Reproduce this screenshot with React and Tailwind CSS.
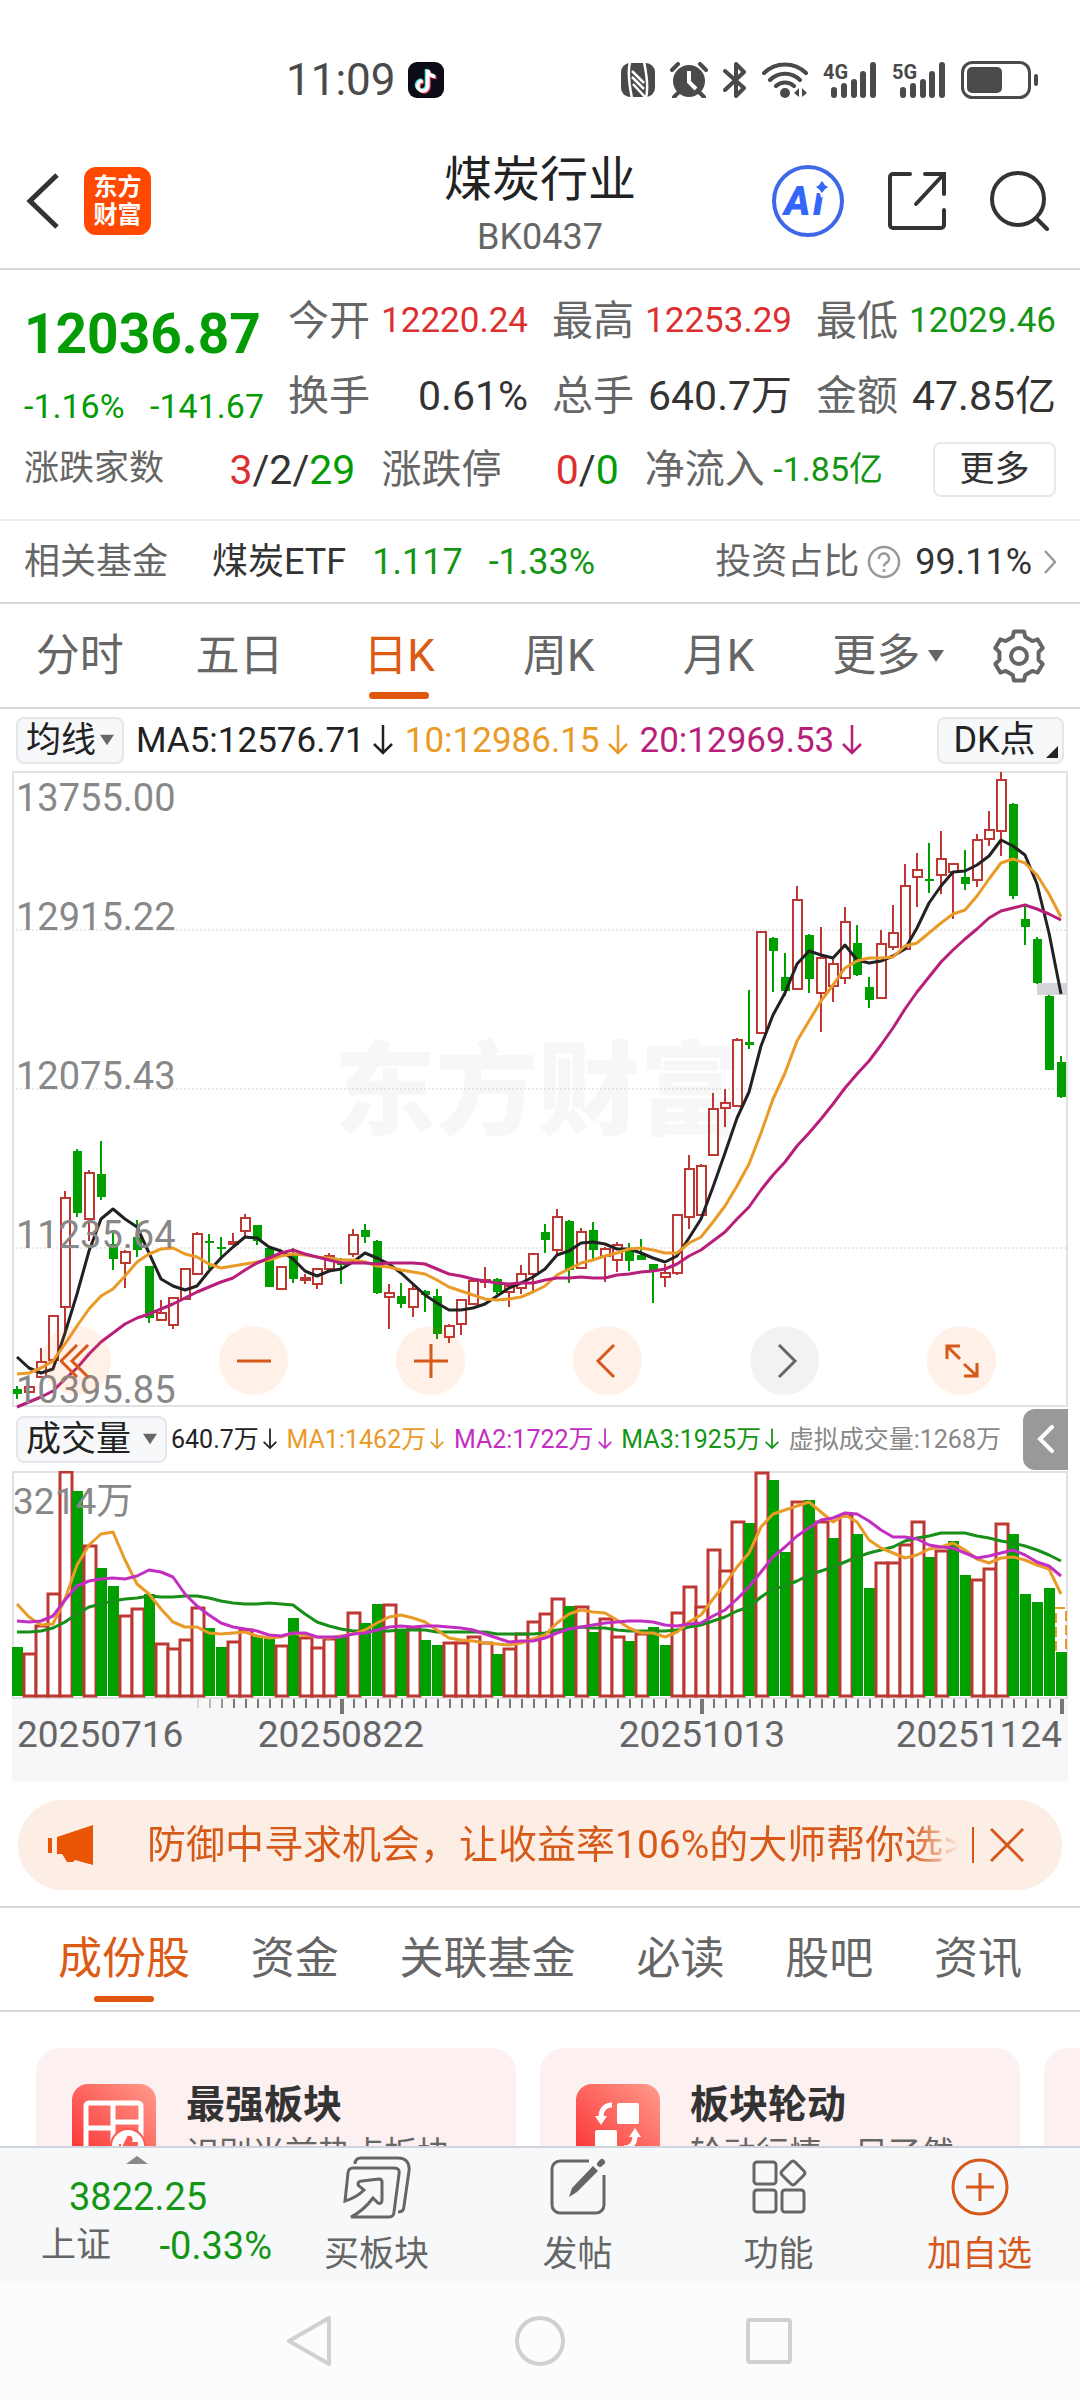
import React, { useState } from 'react';
import clsx from 'clsx';

const RED = '#bd3833';
const GREEN = '#009f00';
const ORANGE = '#ea9a26';
const STEP = 12;

// [rising, high, bodyTop, bodyBottom, low] in chart units
const CANDLES = [
  [0, 615, 618, 623, 628], [1, 615, 616, 621, 621], [1, 577, 591, 606, 606], [1, 544, 545, 589, 589],
  [1, 420, 427, 536, 565], [0, 378, 380, 442, 446], [1, 399, 402, 448, 470], [0, 370, 403, 426, 429],
  [0, 462, 473, 488, 499], [1, 479, 481, 492, 517], [0, 449, 466, 479, 486], [0, 495, 495, 547, 552],
  [1, 529, 542, 549, 549], [1, 527, 527, 554, 558], [1, 498, 498, 528, 528], [1, 461, 463, 503, 503],
  [0, 463, 470, 471, 498], [0, 466, 476, 477, 487], [1, 462, 471, 473, 473], [1, 443, 447, 460, 466],
  [0, 454, 454, 470, 474], [0, 477, 477, 516, 516], [1, 496, 496, 518, 518], [0, 477, 483, 508, 512],
  [1, 503, 507, 509, 513], [1, 498, 498, 513, 518], [1, 482, 485, 498, 498], [0, 487, 492, 494, 513],
  [1, 458, 464, 483, 486], [0, 453, 459, 466, 472], [0, 469, 470, 522, 523], [1, 513, 522, 526, 558],
  [0, 512, 525, 533, 537], [1, 512, 518, 536, 546], [0, 519, 520, 524, 541], [0, 518, 525, 563, 568],
  [1, 553, 555, 566, 572], [1, 529, 529, 553, 564], [1, 508, 510, 533, 533], [1, 496, 509, 511, 517],
  [0, 507, 508, 521, 523], [1, 515, 515, 521, 536], [1, 494, 503, 517, 523], [1, 483, 483, 503, 520],
  [0, 453, 461, 469, 482], [1, 438, 446, 479, 484], [0, 449, 450, 499, 512], [1, 457, 461, 497, 497],
  [0, 451, 459, 479, 488], [1, 476, 478, 485, 511], [1, 471, 474, 489, 501], [0, 472, 480, 490, 500],
  [0, 468, 484, 489, 489], [0, 493, 493, 499, 532], [1, 493, 502, 506, 516], [1, 444, 444, 502, 504],
  [1, 384, 398, 446, 458], [1, 393, 395, 444, 444], [1, 322, 338, 384, 384], [1, 318, 332, 337, 356],
  [1, 267, 269, 335, 335], [0, 219, 271, 274, 278], [1, 161, 161, 262, 262], [0, 166, 167, 180, 221],
  [0, 182, 206, 220, 225], [1, 115, 129, 218, 218], [0, 163, 164, 208, 222], [1, 156, 187, 222, 261],
  [1, 187, 193, 215, 231], [1, 136, 151, 207, 213], [0, 154, 172, 204, 205], [0, 206, 216, 229, 237],
  [1, 159, 173, 227, 227], [1, 134, 162, 176, 179], [1, 93, 115, 178, 178], [1, 82, 99, 106, 136],
  [0, 72, 108, 109, 122], [1, 60, 88, 104, 123], [1, 93, 93, 101, 148], [0, 79, 106, 113, 119],
  [1, 63, 69, 109, 116], [1, 40, 59, 68, 75], [1, 1, 9, 60, 85], [0, 32, 33, 125, 128],
  [0, 133, 148, 156, 174], [0, 166, 168, 212, 213], [0, 224, 225, 299, 299], [0, 285, 291, 326, 327],
];

const MA5 = [
  586, 597, 602, 598, 562, 523, 480, 448, 438, 448, 456, 482, 508, 515, 519, 515, 500, 487, 476, 466, 467, 476,
  480, 488, 500, 505, 500, 498, 491, 482, 487, 493, 502, 513, 524, 532, 539, 539, 537, 533, 525, 517, 512, 506,
  498, 484, 480, 472, 471, 473, 478, 478, 482, 487, 491, 485, 467, 448, 416, 382, 347, 321, 275, 244, 222, 193,
  180, 184, 187, 174, 189, 192, 190, 185, 178, 157, 132, 115, 101, 100, 94, 85, 69, 75, 84, 113, 162, 223,
];

const MA10 = [
  603, 602, 597, 590, 573, 555, 538, 525, 518, 505, 491, 483, 478, 477, 483, 486, 493, 497, 495, 493, 491, 489,
  485, 483, 484, 486, 487, 489, 489, 491, 495, 496, 499, 501, 503, 509, 516, 520, 524, 528, 529, 528, 526, 521,
  515, 504, 498, 492, 489, 485, 482, 478, 477, 479, 482, 482, 472, 466, 451, 435, 415, 393, 362, 328, 302, 270,
  250, 230, 214, 197, 190, 187, 187, 186, 175, 172, 162, 152, 143, 139, 125, 108, 92, 88, 92, 104, 123, 146,
];

const MA20 = [
  636, 631, 626, 620, 608, 597, 583, 571, 562, 553, 547, 543, 538, 533, 527, 521, 516, 511, 507, 499, 492, 487,
  482, 479, 483, 486, 489, 492, 492, 492, 493, 492, 492, 492, 493, 498, 503, 505, 508, 510, 512, 513, 512, 512,
  509, 507, 507, 506, 507, 507, 504, 503, 501, 500, 498, 493, 485, 479, 470, 461, 448, 436, 419, 404, 391, 375,
  362, 348, 333, 317, 303, 290, 274, 257, 238, 221, 206, 191, 179, 168, 158, 147, 140, 137, 134, 138, 143, 149,
];

// positive = rising (hollow), negative = falling (filled)
const VOLUMES = [
  -49, 43, 71, 103, 225, -205, 151, -128, -110, 81, 88, -102, 53, 48, 57, 89, -68, -49, 55, 67, -59, -59,
  51, -78, 59, 49, 58, -59, 84, -73, -92, 92, -67, 68, -56, -51, 54, 54, 60, 54, -42, 48, 63, 75,
  83, 98, -90, 90, -64, 78, 60, -55, 63, -69, -51, 84, 110, 90, 147, 126, 175, -173, 224, -216, -144, 195,
  -196, 175, -158, 181, -162, -108, 134, 134, 152, 175, -139, 146, -155, -121, 117, 128, 173, -162, -102, -94, -108, -44,
];

const VMA1 = [
  133, 146, 154, 153, 128, 94, 74, 63, 61, 89, 113, 123, 138, 151, 156, 156, 162, 163, 162, 161, 165, 167,
  166, 162, 164, 166, 167, 165, 163, 159, 152, 146, 144, 147, 151, 159, 167, 169, 170, 172, 173, 174, 172, 168,
  164, 152, 143, 139, 141, 142, 149, 157, 162, 162, 166, 161, 151, 144, 128, 113, 96, 82, 56, 43, 39, 35,
  31, 41, 51, 44, 51, 69, 77, 82, 87, 84, 78, 76, 72, 79, 88, 92, 87, 86, 89, 94, 98, 123,
];

const VMA2 = [
  150, 151, 150, 145, 129, 115, 110, 108, 107, 108, 105, 99, 101, 106, 123, 135, 144, 152, 156, 158, 160, 164,
  165, 162, 162, 166, 166, 166, 163, 162, 159, 156, 155, 156, 155, 155, 156, 157, 159, 163, 167, 171, 170, 170,
  167, 162, 158, 156, 154, 152, 151, 150, 150, 151, 154, 155, 153, 152, 145, 139, 128, 116, 101, 86, 76, 65,
  57, 49, 47, 42, 43, 50, 59, 66, 66, 68, 74, 76, 77, 82, 87, 85, 82, 79, 84, 91, 95, 105,
];

const VMA3 = [
  161, 161, 160, 157, 151, 143, 136, 133, 130, 128, 127, 125, 126, 126, 125, 125, 127, 130, 132, 133, 133, 132,
  133, 134, 143, 151, 155, 158, 160, 160, 160, 160, 159, 159, 159, 161, 161, 161, 161, 161, 163, 163, 163, 163,
  162, 159, 158, 156, 157, 157, 159, 160, 160, 160, 160, 159, 156, 154, 150, 146, 140, 136, 126, 118, 115, 110,
  104, 100, 96, 91, 86, 82, 79, 76, 70, 67, 65, 62, 62, 62, 65, 67, 70, 72, 75, 79, 84, 90,
];

const cx = (i) => 5 + i * STEP;
const toPoints = (values) => values.map((v, i) => `${cx(i)},${v}`).join(' ');

const MaLine = ({ values, color, width = 3 }) => (
  <polyline points={toPoints(values)} fill="none" stroke={color} strokeWidth={width} strokeLinejoin="round" />
);

const DownArrow = ({ className }) => (
  <svg viewBox="0 0 20 30" className={className} fill="none" stroke="currentColor" strokeWidth="2.5" aria-hidden="true">
    <path d="M10 0v28M1 19l9 9 9-9" />
  </svg>
);

const Caret = ({ className }) => (
  <svg viewBox="0 0 16 12" className={className} fill="currentColor" aria-hidden="true">
    <path d="M0 0h16L8 12z" />
  </svg>
);

function StatusBar() {
  return (
    <div className="flex h-[118px] shrink-0 items-center justify-between pt-[42px] pr-[42px] pl-[286px] text-[#4a4a4a]">
      <div className="flex items-center gap-3">
        <span className="text-[44px] leading-none">11:09</span>
        <svg viewBox="0 0 36 36" className="h-9 w-9" aria-hidden="true">
          <rect width="36" height="36" rx="9" fill="#0b0c18" />
          <g fill="none" strokeWidth="3.6">
            <path d="M18.500 7v16.500a5 5 0 1 1-5-5.500M18.500 7c.5 4 3.500 6.500 7.500 6.500" stroke="#5fe6e6" />
            <path d="M21 9v16.500a5 5 0 1 1-5-5.500M21 9c.5 4 3.500 6.500 7.500 6.500" stroke="#e8325a" />
            <path d="M19.800 8v16.500a5 5 0 1 1-5-5.500M19.800 8c.5 4 3.500 6.500 7.500 6.500" stroke="#fff" />
          </g>
        </svg>
      </div>
      <div className="flex items-center gap-[15px]">
        <svg viewBox="0 0 34 36" className="h-9 w-[34px]" aria-hidden="true">
          <rect y="1" width="34" height="34" rx="9" fill="currentColor" />
          <g fill="none" stroke="#fff" strokeWidth="2.500">
            <path d="M9 0c-2 8-1 22 2 36M25 36c2-8 1-22-2-36" />
            <path d="M11 9l12 12M11 15l12 12M12 22l12 13" />
          </g>
        </svg>
        <svg viewBox="0 0 38 36" className="h-9 w-[38px]" aria-hidden="true">
          <circle cx="19" cy="19" r="16" fill="currentColor" />
          <path d="M19 9v11l7 7" fill="none" stroke="#fff" strokeWidth="4" />
          <path d="M2 8l6-6M36 8l-6-6M8 31l-4 4M30 31l4 4" fill="none" stroke="currentColor" strokeWidth="4" strokeLinecap="round" />
        </svg>
        <svg viewBox="0 0 24 36" className="h-9 w-6" fill="none" stroke="currentColor" strokeWidth="4" strokeLinecap="round" strokeLinejoin="round" aria-hidden="true">
          <path d="M2 9l19 17-8 8V2l8 8L2 28" />
        </svg>
        <svg viewBox="0 0 46 36" className="h-9 w-[46px]" fill="none" stroke="currentColor" strokeWidth="4" strokeLinecap="round" aria-hidden="true">
          <path d="M2 11a30 30 0 0 1 42 0M8 18a21 21 0 0 1 30 0M14 24a13 13 0 0 1 18 0" />
          <circle cx="23" cy="31" r="5" fill="currentColor" stroke="none" />
          <path d="M37 26v9l-5-4zM40 35v-9l5 5z" fill="currentColor" stroke="none" />
        </svg>
        <Signal label="4G" />
        <Signal label="5G" />
        <svg viewBox="0 0 77 38" className="h-[38px] w-[77px]" aria-hidden="true">
          <rect x="1.500" y="1.500" width="67" height="35" rx="10" fill="none" stroke="currentColor" strokeWidth="3" />
          <rect x="6" y="6" width="35" height="26" rx="5" fill="currentColor" />
          <rect x="73" y="13" width="4" height="12" rx="2" fill="currentColor" />
        </svg>
      </div>
    </div>
  );
}

function Signal({ label }) {
  return (
    <svg viewBox="0 0 54 36" className="h-9 w-[54px] overflow-visible" fill="currentColor" aria-label={label}>
      <text x="0" y="17" fontSize="20" fontWeight="700">{label}</text>
      <rect x="8" y="25" width="6" height="11" rx="3" />
      <rect x="18" y="21" width="6" height="15" rx="3" />
      <rect x="28" y="17" width="6" height="19" rx="3" />
      <rect x="37" y="9" width="6" height="27" rx="3" />
      <rect x="47" y="0" width="6" height="36" rx="3" />
    </svg>
  );
}

function Header() {
  return (
    <header className="grid h-[152px] shrink-0 grid-cols-3 items-center border-b-2 border-[#d9d9d9] px-6 pt-4">
      <div className="flex items-center gap-6">
        <button aria-label="返回" className="text-[#333]">
          <svg viewBox="0 0 36 56" className="h-14 w-9" fill="none" stroke="currentColor" strokeWidth="5">
            <path d="M33 2L6 28l27 26" />
          </svg>
        </button>
        <div className="flex h-[68px] w-[67px] flex-col items-center justify-center rounded-xl bg-[#ff4800] text-[24px] leading-[28px] font-bold text-white">
          <span>东方</span>
          <span>财富</span>
        </div>
      </div>
      <div className="pt-3 text-center">
        <h1 className="text-[48px] leading-[60px] text-[#222]">煤炭行业</h1>
        <p className="text-[36px] leading-[54px] text-[#666]">BK0437</p>
      </div>
      <div className="flex items-center justify-end gap-11 pr-[6px]">
        <button aria-label="AI">
          <svg viewBox="0 0 72 72" className="h-[72px] w-[72px]" fill="#3566fb">
            <circle cx="36" cy="36" r="34" fill="none" stroke="#3f68e8" strokeWidth="4" />
            <text x="12" y="50" fontSize="40" fontWeight="900" fontStyle="italic">A</text>
            <text x="41" y="50" fontSize="40" fontWeight="900" fontStyle="italic">i</text>
            <path d="M50 12c1 6 4 9 10 10-6 1-9 4-10 10-1-6-4-9-10-10 6-1 9-4 10-10z" stroke="#fff" strokeWidth="2" />
          </svg>
        </button>
        <button aria-label="分享" className="text-[#333]">
          <svg viewBox="0 0 58 58" className="h-[58px] w-[58px]" fill="none" stroke="currentColor" strokeWidth="4" strokeLinecap="round">
            <path d="M22 2H5a3 3 0 0 0-3 3v48a3 3 0 0 0 3 3h48a3 3 0 0 0 3-3V38M37 2h19v20M55 3L28 32" />
          </svg>
        </button>
        <button aria-label="搜索" className="text-[#333]">
          <svg viewBox="0 0 60 60" className="h-[60px] w-[60px]" fill="none" stroke="currentColor" strokeWidth="4" strokeLinecap="round">
            <circle cx="28" cy="28" r="26" />
            <path d="M46 47l11 11" />
          </svg>
        </button>
      </div>
    </header>
  );
}

const STATS = [
  { label: '今开', value: '12220.24', tone: 'text-[35px] text-[#dd2f2f]' },
  { label: '最高', value: '12253.29', tone: 'text-[35px] text-[#dd2f2f]' },
  { label: '最低', value: '12029.46', tone: 'text-[35px] text-[#149614]' },
  { label: '换手', value: '0.61%', tone: 'text-[41px] text-[#333]' },
  { label: '总手', value: '640.7万', tone: 'text-[41px] text-[#333]' },
  { label: '金额', value: '47.85亿', tone: 'text-[41px] text-[#333]' },
];

function Quote() {
  return (
    <section className="border-b-2 border-[#ededed] px-6 pt-6 pb-[22px] text-[#666]">
      <div className="grid grid-cols-4 items-start gap-x-6">
        <div className="flex flex-col text-[#049c04]">
          <span className="pt-2 text-[55px] leading-[64px] font-bold">12036.87</span>
          <div className="flex justify-between pt-4 text-[34px] leading-[48px]">
            <span>-1.16%</span>
            <span>-141.67</span>
          </div>
        </div>
        <dl className="col-span-3 grid grid-cols-3 gap-x-6 gap-y-[27px] pt-[3px]">
          {STATS.map((s) => (
            <div key={s.label} className="flex h-12 items-center justify-between whitespace-nowrap">
              <dt className="text-[41px] leading-[48px]">{s.label}</dt>
              <dd className={clsx('leading-[48px]', s.tone)}>{s.value}</dd>
            </div>
          ))}
        </dl>
      </div>
      <div className="mt-3 flex items-center gap-[26px] whitespace-nowrap">
        <div className="flex flex-[331] items-center justify-between">
          <span className="text-[35px]">涨跌家数</span>
          <span className="text-[41px] leading-[54px] text-[#333]">
            <span className="text-[#dd2f2f]">3</span>/2/<span className="text-[#049c04]">29</span>
          </span>
        </div>
        <div className="flex flex-[237] items-center justify-between">
          <span className="text-[40px] leading-[54px]">涨跌停</span>
          <span className="text-[41px] leading-[54px] text-[#333]">
            <span className="text-[#dd2f2f]">0</span>/<span className="text-[#049c04]">0</span>
          </span>
        </div>
        <div className="flex flex-[238] items-center justify-between">
          <span className="text-[40px] leading-[54px]">净流入</span>
          <span className="text-[34px] text-[#149614]">-1.85亿</span>
        </div>
        <button className="ml-6 h-[55px] w-[123px] rounded-lg border-2 border-[#e8e8ea] text-[35px] leading-none text-[#333]">
          更多
        </button>
      </div>
    </section>
  );
}

function RelatedFund() {
  return (
    <section className="flex h-[83px] shrink-0 items-center border-b-2 border-[#d9d9d9] px-6 text-[36px] whitespace-nowrap text-[#666]">
      <span>相关基金</span>
      <a href="#etf" className="ml-[44px] flex gap-[26px] text-[#149614]">
        <span className="text-[#333]">煤炭ETF</span>
        <span>1.117</span>
        <span>-1.33%</span>
      </a>
      <a href="#ratio" className="ml-auto flex items-center">
        <span>投资占比</span>
        <svg viewBox="0 0 34 34" className="mr-[14px] ml-2 h-[34px] w-[34px]" fill="none" stroke="#999" strokeWidth="2.500" aria-hidden="true">
          <circle cx="17" cy="17" r="15" />
          <path d="M12 14a5 5 0 1 1 7 4c-1.500 1-2 1.500-2 3.500M17 24v3" />
        </svg>
        <span className="text-[#333]">99.11%</span>
        <svg viewBox="0 0 12 24" className="ml-3 h-6 w-3" fill="none" stroke="#999" strokeWidth="2.500" aria-hidden="true">
          <path d="M1 1l10 11L1 23" />
        </svg>
      </a>
    </section>
  );
}

// six-tooth gear outline
const gearPoints = Array.from({ length: 6 }, (_, i) => {
  const a = (i * Math.PI) / 3 - Math.PI / 2;
  return [[-0.32, 20], [-0.2, 25], [0.2, 25], [0.32, 20]]
    .map(([d, r]) => `${(27 + r * Math.cos(a + d)).toFixed(1)},${(27 + r * Math.sin(a + d)).toFixed(1)}`)
    .join(' ');
}).join(' ');

function PeriodTabs() {
  const [active, setActive] = useState('日K');
  const tabs = ['分时', '五日', '日K', '周K', '月K', '更多'];

  return (
    <nav className="flex h-[105px] shrink-0 items-stretch border-b-2 border-[#d9d9d9] text-[#666]">
      {tabs.map((tab) => (
        <button
          key={tab}
          onClick={() => setActive(tab)}
          className={clsx(
            'relative flex flex-1 items-center justify-center text-[44px] whitespace-nowrap',
            active === tab && 'text-[#dd5a14]'
          )}
        >
          {tab === '更多' ? (
            <span className="flex items-center gap-2 pl-5">
              {tab}
              <Caret className="h-3 w-4" />
            </span>
          ) : (
            tab
          )}
          {active === tab && <span className="absolute bottom-2 h-[7px] w-[60px] rounded-full bg-[#e0560c]" />}
        </button>
      ))}
      <button aria-label="设置" className="flex w-[122px] items-center justify-center">
        <svg viewBox="0 0 54 54" className="h-[54px] w-[54px]" fill="none" stroke="currentColor" strokeWidth="4" strokeLinejoin="round">
          <polygon points={gearPoints} />
          <circle cx="27" cy="27" r="8" />
        </svg>
      </button>
    </nav>
  );
}

function IndicatorBar() {
  return (
    <div className="flex h-[62px] shrink-0 items-center px-4 text-[35px] leading-none whitespace-nowrap">
      <button className="flex h-[47px] w-[108px] items-center justify-center gap-1 rounded-lg border-2 border-[#e4e6ea] bg-[#f7f8fa] leading-none text-[#222]">
        均线
        <Caret className="h-3 w-[14px] text-[#666]" />
      </button>
      <span className="ml-3 flex items-center gap-2 text-[#222]">
        MA5:12576.71
        <DownArrow className="h-[30px] w-5" />
      </span>
      <span className="ml-3 flex items-center gap-2 text-[#ea9a26]">
        10:12986.15
        <DownArrow className="h-[30px] w-5" />
      </span>
      <span className="ml-3 flex items-center gap-2 text-[#b81f7a]">
        20:12969.53
        <DownArrow className="h-[30px] w-5" />
      </span>
      <button className="relative ml-auto h-[47px] w-[127px] rounded-lg border-2 border-[#e4e6ea] bg-[#f7f8fa] pr-3 text-[36px] leading-none text-[#222]">
        DK点
        <svg viewBox="0 0 12 12" className="absolute right-1 bottom-1 h-3 w-3" fill="currentColor" aria-hidden="true">
          <path d="M12 0v12H0z" />
        </svg>
      </button>
    </div>
  );
}

const PRICE_LABELS = [
  ['13755.00', 40],
  ['12915.22', 159],
  ['12075.43', 318],
  ['11235.64', 477],
  ['10395.85', 632],
];

function PriceChart() {
  return (
    <div className="relative mx-3">
      <svg viewBox="0 0 1056 636" className="block w-full overflow-visible" role="img" aria-label="日K线">
        <text x="322" y="356" fontSize="102" fontWeight="900" fill="#f7f7f7">东方财富</text>
        {[159, 318, 477].map((y) => (
          <line key={y} x1="0" x2="1056" y1={y} y2={y} stroke="#d2d2d2" strokeDasharray="2 2" />
        ))}
        <rect x="1" y="1" width="1054" height="634" fill="none" stroke="#e2e2e2" strokeWidth="2" />
        <rect x="1025" y="212" width="30" height="12" fill="#d3d5da" />
        {CANDLES.map(([up, high, top, bottom, low], i) => {
          const h = Math.max(bottom - top, 2);
          return up ? (
            <g key={i} stroke={RED} strokeWidth="2" fill="none">
              <path d={`M${cx(i)} ${high}V${top}M${cx(i)} ${bottom}V${low}`} />
              <rect x={cx(i) - 4} y={top} width="9" height={h} />
            </g>
          ) : (
            <g key={i} fill={GREEN}>
              <rect x={cx(i) - 1} y={high} width="2" height={low - high} />
              <rect x={cx(i) - 4} y={top} width="9" height={h} />
            </g>
          );
        })}
        <MaLine values={MA5} color="#222" />
        <MaLine values={MA10} color={ORANGE} />
        <MaLine values={MA20} color="#b81f7a" />
        {PRICE_LABELS.map(([label, y]) => (
          <text key={label} x="4" y={y} fontSize="38" fill="#888">{label}</text>
        ))}
      </svg>
      <ChartControls />
    </div>
  );
}

const CONTROLS = [
  { label: '最早', d: 'M17 1L1 17l16 16M28 1L12 17l16 16' },
  { label: '缩小', d: 'M0 17h34' },
  { label: '放大', d: 'M0 17h34M17 0v34' },
  { label: '左移', d: 'M23 1L7 17l16 16' },
  { label: '右移', d: 'M11 1l16 16-16 16', muted: true },
  { label: '全屏', d: 'M2 15V2h13M2 2l13 13M32 19v13H19M32 32L19 20' },
];

function ChartControls() {
  return (
    <div className="absolute right-[72px] bottom-3 left-[30px] flex justify-between">
      {CONTROLS.map((c) => (
        <button
          key={c.label}
          aria-label={c.label}
          className={clsx(
            'flex h-[69px] w-[69px] items-center justify-center rounded-full',
            c.muted ? 'bg-black/5 text-[#666]' : 'bg-[#ff6a1e]/10 text-[#d6591a]'
          )}
        >
          <svg viewBox="0 0 34 34" className="h-[34px] w-[34px]" fill="none" stroke="currentColor" strokeWidth="3">
            <path d={c.d} />
          </svg>
        </button>
      ))}
    </div>
  );
}

const VOLUME_MA = [
  { text: '640.7万', color: 'text-[#222]' },
  { text: 'MA1:1462万', color: 'text-[#ea9a26]' },
  { text: 'MA2:1722万', color: 'text-[#c22ec2]' },
  { text: 'MA3:1925万', color: 'text-[#149614]' },
];

function VolumeBar() {
  return (
    <div className="mr-3 flex h-16 shrink-0 items-center pl-4 text-[25px] leading-none whitespace-nowrap">
      <button className="mr-1 flex h-[47px] w-[151px] items-center justify-center gap-3 rounded-lg border-2 border-[#e4e6ea] bg-[#f7f8fa] text-[35px] leading-none text-[#222]">
        成交量
        <Caret className="h-3 w-[14px] text-[#666]" />
      </button>
      <div className="flex flex-1 items-center justify-between pr-[22px]">
        {VOLUME_MA.map((v) => (
          <span key={v.text} className={clsx('flex items-center gap-1', v.color)}>
            {v.text}
            <DownArrow className="h-[30px] w-[14px]" />
          </span>
        ))}
        <span className="text-[#888]">虚拟成交量:1268万</span>
      </div>
      <button aria-label="展开" className="flex h-[61px] w-[45px] items-center justify-center rounded-l-xl bg-[#999] text-white">
        <svg viewBox="0 0 18 28" className="h-7 w-[18px]" fill="none" stroke="currentColor" strokeWidth="4" strokeLinecap="round">
          <path d="M15 2L3 14l12 12" />
        </svg>
      </button>
    </div>
  );
}

function VolumeChart() {
  return (
    <div className="mx-3">
      <svg viewBox="0 0 1056 228" className="block w-full" role="img" aria-label="成交量">
        <rect x="1" y="1" width="1054" height="226" fill="none" stroke="#e2e2e2" strokeWidth="2" />
        {VOLUMES.map((v, i) =>
          v > 0 ? (
            <rect key={i} x={cx(i) - 5} y={226 - v} width="12" height={v - 1} fill="#fff" stroke={RED} strokeWidth="3" />
          ) : (
            <rect key={i} x={cx(i) - 5} y={225 + v} width="11" height={-v} fill={GREEN} />
          )
        )}
        <path d="M1044 180V137h10v43" fill="none" stroke={ORANGE} strokeWidth="2" strokeDasharray="10 4" />
        <MaLine values={VMA3} color="#188f18" />
        <MaLine values={VMA1} color={ORANGE} />
        <MaLine values={VMA2} color="#c22ec2" />
        <text x="1" y="43" fontSize="37" fill="#888">3214万</text>
      </svg>
      <svg viewBox="0 0 1056 83" className="block w-full bg-[#f7f7fa]" role="img" aria-label="日期">
        {VOLUMES.map((_, i) => {
          if (i < 15) return null;
          const major = i === 27 || i === 57 || i === 87;
          return (
            <line
              key={i}
              x1={cx(i) + 1}
              x2={cx(i) + 1}
              y1="0"
              y2={major ? 15 : 9}
              stroke="#777"
              strokeWidth={major ? 4 : 2}
              opacity={Math.min(1, (i - 14) / 4)}
            />
          );
        })}
        <g fontSize="37" fill="#666">
          <text x="5" y="48">20250716</text>
          <text x="329" y="48" textAnchor="middle">20250822</text>
          <text x="690" y="48" textAnchor="middle">20251013</text>
          <text x="1050" y="48" textAnchor="end">20251124</text>
        </g>
      </svg>
    </div>
  );
}

function Banner() {
  return (
    <div className="border-b-2 border-[#d9d9d9] px-[18px] pt-[18px] pb-4">
      <div className="flex h-[90px] items-center rounded-full bg-[#fceee5] pr-[38px] pl-[30px] text-[#d6591a]">
        <svg viewBox="0 0 46 40" className="h-10 w-[46px] shrink-0" fill="#e95504" aria-hidden="true">
          <path d="M0 13h4v15H0zM9 12L45 0v40l-18-5-2 2h-6l-3-5-2-3H9z" />
        </svg>
        <a
          href="#master"
          className="ml-[53px] min-w-0 flex-1 overflow-hidden bg-gradient-to-r from-[#d6591a] from-94% to-transparent bg-clip-text text-[39px] leading-[60px] whitespace-nowrap text-transparent"
        >
          防御中寻求机会，让收益率106%的大师帮你选&gt;
        </a>
        <span className="mr-4 ml-3 h-9 w-[2px] bg-[#d6591a]" />
        <button aria-label="关闭">
          <svg viewBox="0 0 34 34" className="h-[34px] w-[34px]" fill="none" stroke="currentColor" strokeWidth="3">
            <path d="M1 1l32 32M33 1L1 33" />
          </svg>
        </button>
      </div>
    </div>
  );
}

function ContentTabs() {
  const [active, setActive] = useState('成份股');

  return (
    <nav className="flex h-[104px] shrink-0 items-stretch justify-between border-b-2 border-[#d9d9d9] px-[58px] text-[44px] whitespace-nowrap text-[#666]">
      {['成份股', '资金', '关联基金', '必读', '股吧', '资讯'].map((tab) => (
        <button
          key={tab}
          onClick={() => setActive(tab)}
          className={clsx('relative flex items-center justify-center', active === tab && 'text-[#dd5a14]')}
        >
          {tab}
          {active === tab && <span className="absolute bottom-2 h-[6px] w-[60px] rounded-full bg-[#e0560c]" />}
        </button>
      ))}
    </nav>
  );
}

function BlockIcon() {
  return (
    <g>
      <rect x="14" y="19" width="55" height="50" rx="3" fill="none" stroke="#fff" strokeWidth="5" />
      <path d="M14 44h26M41 19v50M41 38h28M24 69h20" stroke="#fff" strokeWidth="5" />
      <circle cx="56" cy="62" r="17" fill="#fff" stroke="#fd5a52" strokeWidth="2" />
      <path d="M48 60v12M52 61l4-8c4-1 4 2 3 6h6l-1 12H52z" fill="#fd5a52" stroke="#fd5a52" strokeWidth="2" />
    </g>
  );
}

function RotateIcon() {
  return (
    <g fill="#fff">
      <rect x="41" y="19" width="22" height="21" rx="2" />
      <rect x="19" y="46" width="22" height="21" rx="2" />
      <path d="M19 32h12l-6 9zM53 53h12l-6-9z" />
      <path d="M25 33c0-7 4-12 11-12M59 52c0 7-4 12-11 12" fill="none" stroke="#fff" strokeWidth="5" />
    </g>
  );
}

function FeatureCards() {
  const cards = [
    { title: '最强板块', text: '识别当前热点板块', icon: <BlockIcon /> },
    { title: '板块轮动', text: '轮动行情一目了然', icon: <RotateIcon /> },
    { title: '', text: '', icon: null },
  ];

  return (
    <div className="flex gap-6 overflow-hidden pt-9 pl-9">
      {cards.map((card, i) => (
        <article key={i} className="flex h-[156px] w-[480px] shrink-0 gap-[30px] rounded-3xl bg-[#fdf0f0] px-9 pt-9">
          {card.icon && (
            <svg viewBox="0 0 84 84" className="h-[84px] w-[84px] shrink-0" aria-hidden="true">
              <defs>
                <linearGradient id={`tile${i}`} x1="1" y1="0" x2="0" y2="1">
                  <stop offset="0" stopColor="#ff9c8c" />
                  <stop offset="1" stopColor="#fb2a2e" />
                </linearGradient>
              </defs>
              <rect width="84" height="84" rx="16" fill={`url(#tile${i})`} />
              {card.icon}
            </svg>
          )}
          <div className="whitespace-nowrap">
            <h2 className="text-[39px] leading-[42px] font-bold text-[#333]">{card.title}</h2>
            <p className="pt-2 text-[33px] leading-[40px] text-[#666]">{card.text}</p>
          </div>
        </article>
      ))}
    </div>
  );
}

const ACTIONS = [
  {
    label: '买板块',
    icon: (
      <>
        <path d="M12 8c0-4 2-6 6-6h37c8 0 12 5 11 13l-5 35c0 4-2 6-6 6" />
        <path d="M2 45L5 17c0-3 2-5 5-5h41c4 0 6 2 5 6l-5 38c0 3-2 5-5 5H8C16 57 24 50 30 42l5 5c2 1 4 0 4-3V26c0-2-1-3-3-3l-17 2c-4 0-5 3-3 5l5 4C15 40 9 43 2 45z" />
      </>
    ),
  },
  {
    label: '发帖',
    icon: (
      <>
        <path d="M45 5H16a8 8 0 0 0-8 8v36a8 8 0 0 0 8 8h36a8 8 0 0 0 8-8V19" />
        <path d="M49 10l5 5-21 21-8 5 3-9z" fill="currentColor" stroke="none" />
        <path d="M56 8l2-2" strokeWidth="6" strokeLinecap="round" />
      </>
    ),
  },
  {
    label: '功能',
    icon: (
      <>
        <rect x="9" y="6" width="22" height="22" rx="3" />
        <rect x="9" y="34" width="22" height="22" rx="3" />
        <rect x="37" y="34" width="22" height="22" rx="3" />
        <path d="M46 6q2-2 4 0l9 9q2 2 0 4l-9 9q-2 2-4 0l-9-9q-2-2 0-4z" />
      </>
    ),
  },
  {
    label: '加自选',
    accent: true,
    icon: (
      <>
        <circle cx="34" cy="31" r="27" />
        <path d="M20 31h28M34 17v28" />
      </>
    ),
  },
];

function BottomBar() {
  return (
    <footer className="flex h-[136px] shrink-0 border-t-2 border-[#d0d4de] bg-[#f7f8fa] whitespace-nowrap text-[#666]">
      <button className="flex w-[276px] flex-col pt-2 pl-[41px] text-left text-[#149614]">
        <svg viewBox="0 0 22 8" className="ml-[85px] h-2 w-[22px]" fill="#888" aria-hidden="true">
          <path d="M11 0l11 8H0z" />
        </svg>
        <span className="pt-2 pl-7 text-[38px] leading-[50px]">3822.25</span>
        <span className="flex items-center justify-between text-[38px] leading-[48px]">
          <span className="text-[35px] text-[#666]">上证</span>
          <span className="pr-1">-0.33%</span>
        </span>
      </button>
      {ACTIONS.map((a) => (
        <button key={a.label} className={clsx('flex flex-1 flex-col items-center pt-2 text-[35px]', a.accent && 'text-[#d6591a]')}>
          <svg viewBox="0 0 68 64" className="h-16 w-[68px]" fill="none" stroke="currentColor" strokeWidth="3" aria-hidden="true">
            {a.icon}
          </svg>
          <span className="pt-[10px] leading-[50px]">{a.label}</span>
        </button>
      ))}
    </footer>
  );
}

function SystemNav() {
  return (
    <div className="flex h-[118px] shrink-0 items-center justify-center gap-[180px] bg-[#fcfcfc] text-[#d0d0d0]">
      <button aria-label="后退">
        <svg viewBox="0 0 50 50" className="h-[50px] w-[50px]" fill="none" stroke="currentColor" strokeWidth="4" strokeLinejoin="round">
          <path d="M44 2v46L4 25z" />
        </svg>
      </button>
      <button aria-label="主页">
        <svg viewBox="0 0 50 50" className="h-[50px] w-[50px]" fill="none" stroke="currentColor" strokeWidth="4">
          <circle cx="25" cy="25" r="23" />
        </svg>
      </button>
      <button aria-label="最近任务">
        <svg viewBox="0 0 50 50" className="h-[50px] w-[50px]" fill="none" stroke="currentColor" strokeWidth="4">
          <rect x="3" y="4" width="42" height="42" rx="2" />
        </svg>
      </button>
    </div>
  );
}

export default function App() {
  return (
    <div className="flex h-screen flex-col overflow-hidden bg-white font-['Roboto','Noto_Sans_CJK_SC',sans-serif]">
      <StatusBar />
      <Header />
      <main className="min-h-0 flex-1 overflow-hidden">
        <Quote />
        <RelatedFund />
        <PeriodTabs />
        <IndicatorBar />
        <PriceChart />
        <VolumeBar />
        <VolumeChart />
        <Banner />
        <ContentTabs />
        <FeatureCards />
      </main>
      <BottomBar />
      <SystemNav />
    </div>
  );
}
